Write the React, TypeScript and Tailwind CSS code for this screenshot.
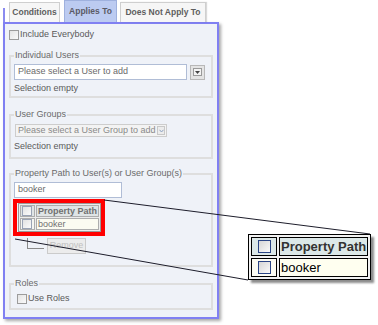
import React from 'react';

const Check = ({ size = 'small' }: { size?: 'small' | 'big' | 'tiny' }) => {
  if (size === 'big') {
    return (
      <span className="block w-[13px] h-[13px] border border-[#2b4585] bg-gradient-to-br from-[#d6d6d6] to-[#fafafa]" />
    );
  }
  if (size === 'tiny') {
    return <span className="block w-[10px] h-[10px] border border-[#9aa3b5] bg-gradient-to-br from-[#e2e2e2] to-[#fbfbfb]" />;
  }
  return <span className="block w-[10px] h-[10px] border border-[#9c9c9c] bg-gradient-to-br from-[#e4e4e4] to-[#fafafa]" />;
};

const Fieldset = ({ legend, className = '', children }: { legend: string; className?: string; children: React.ReactNode }) => (
  <fieldset className={`border-2 border-[#dedede] px-[3px] ${className}`}>
    <legend className="px-[1px] leading-[11px] text-[#6a6a6a]">{legend}</legend>
    {children}
  </fieldset>
);

const App: React.FC = () => {
  return (
    <div className="relative w-[378px] h-[325px] bg-white overflow-hidden font-['Liberation_Sans',Arial,sans-serif] text-[9px]">
      <div className="pl-[3px] w-[225px]">
        {/* Tabs */}
        <div className="flex items-end h-[22px]">
          <div className="w-[2px] h-[14px] bg-[#8b8bf0]" />
          <div className="ml-[4px] w-[51px] h-[20px] flex items-center justify-center border border-b-0 border-[#cfcfcf] bg-[#f6f6f6] font-bold text-[#5e5e5e] text-[8.5px]">
            Conditions
          </div>
          <div className="ml-[4px] w-[53px] h-[22px] flex items-center justify-center border border-b-0 border-[#9fb1de] bg-[#bccbf1] font-bold text-[#5a5a66] text-[8.5px]">
            Applies To
          </div>
          <div className="ml-[3px] w-[86px] h-[20px] flex items-center justify-center border border-b-0 border-[#cfcfcf] bg-[#f6f6f6] font-bold text-[#5e5e5e] text-[8.5px] shadow-[1px_0_1px_rgba(0,0,0,0.15)]">
            Does Not Apply To
          </div>
        </div>

        {/* Panel */}
        <div className="w-[216px] h-[297px] border-2 border-[#8080f2] bg-[#eff2f8] shadow-[2px_2px_3px_rgba(0,0,0,0.35)] px-[4px] pt-[5px] text-[#5a5a5a]">
          <div className="flex items-center gap-[1px] h-[11px]">
            <Check />
            <span className="leading-[11px]">Include Everybody</span>
          </div>

          <Fieldset legend="Individual Users" className="mt-[10px] pb-[2px]">
            <div className="mt-[3px] flex items-center gap-[3px]">
              <div className="w-[173px] h-[16px] border border-[#b0bdd6] bg-white px-[3px] flex items-center text-[#6a6a6a]">
                Please select a User to add
              </div>
              <div className="w-[15px] h-[15px] border border-[#b8b8b8] bg-[#e4e4e4] flex items-center justify-center">
                <span className="w-[9px] h-[8px] border border-[#9a9a9a] bg-[#f4f4f4] flex items-center justify-center">
                  <svg width="5" height="3" viewBox="0 0 5 3">
                    <path d="M0 0h5L2.5 3z" fill="#444" />
                  </svg>
                </span>
              </div>
            </div>
            <div className="mt-[3px] leading-[11px]">Selection empty</div>
          </Fieldset>

          <Fieldset legend="User Groups" className="mt-[11px] pb-[5px]">
            <div className="mt-[4px] ml-[1px] w-[152px] h-[13px] border border-[#cdcdcd] bg-[#f3f3f3] flex items-center justify-between pl-[2px] pr-[1px] text-[#8a8a8a] whitespace-nowrap">
              <span>Please select a User Group to add</span>
              <span className="w-[8px] h-[9px] border border-[#c8c8c8] bg-[#ececec] flex items-center justify-center">
                <svg width="5" height="4" viewBox="0 0 5 4">
                  <path d="M0.5 0.8L2.5 3L4.5 0.8" stroke="#8aa0c0" fill="none" strokeWidth="1" />
                </svg>
              </span>
            </div>
            <div className="mt-[4px] leading-[11px]">Selection empty</div>
          </Fieldset>

          <Fieldset legend="Property Path to User(s) or User Group(s)" className="mt-[9px] pb-[11px]">
            <div className="mt-[3px] w-[108px] h-[16px] border border-[#b0bdd6] bg-white px-[3px] flex items-center text-[#6a6a6a]">
              booker
            </div>
            <div className="mt-[1px] -ml-[1px] w-[92px] border-4 border-[#ff0000] pl-[1px] py-0">
              <table className="border-separate border-spacing-[1px] border border-[#9a9a9a] bg-[#ececec] whitespace-nowrap">
                <tbody>
                  <tr>
                    <td className="w-[16px] h-[12px] border border-[#adadad] bg-[#dfe4e5] p-0">
                      <div className="flex justify-center"><Check size="tiny" /></div>
                    </td>
                    <td className="h-[12px] border border-[#adadad] bg-[#dfe4e5] px-[1px] py-0 font-bold text-[#707070] leading-[10px]">
                      Property Path
                    </td>
                  </tr>
                  <tr>
                    <td className="w-[16px] h-[12px] border border-[#adadad] bg-[#f4f5f1] p-0">
                      <div className="flex justify-center"><Check size="tiny" /></div>
                    </td>
                    <td className="h-[12px] border border-[#adadad] bg-[#fbfbf1] px-[1px] py-0 text-[#707070] leading-[10px]">
                      booker
                    </td>
                  </tr>
                </tbody>
              </table>
            </div>
            <div className="flex items-start mt-[2px]">
              <div className="ml-[13px] w-[17px] h-[11px] border-l border-b border-[#8a8a8a]" />
              <div className="ml-[3px] w-[39px] h-[16px] border border-[#cbcbcb] bg-[#ececec] flex items-center justify-center text-[#c0c0c0]">
                Remove
              </div>
            </div>
          </Fieldset>

          <Fieldset legend="Roles" className="mt-[11px] pb-[4px]">
            <div className="mt-[4px] ml-[3px] flex items-center gap-[1px] h-[11px]">
              <Check />
              <span className="leading-[11px]">Use Roles</span>
            </div>
          </Fieldset>
        </div>
      </div>

      {/* Callout lines */}
      <svg className="absolute inset-0 pointer-events-none" width="378" height="325" viewBox="0 0 378 325">
        <line x1="104" y1="200" x2="370" y2="234" stroke="#1d1d2b" strokeWidth="1" />
        <line x1="15" y1="239" x2="248" y2="280" stroke="#1d1d2b" strokeWidth="1" />
      </svg>

      {/* Magnified callout */}
      <div className="absolute left-[248px] top-[234px] shadow-[3px_3px_2px_rgba(0,0,0,0.45)] text-[13px]">
        <table className="border-separate border-spacing-[2px] border border-black bg-[#f2f2f2] whitespace-nowrap">
          <tbody>
            <tr>
              <td className="w-[26px] h-[19px] border border-black bg-[#dce8e8] p-0">
                <div className="flex justify-center"><Check size="big" /></div>
              </td>
              <td className="h-[19px] border border-black bg-[#dce8e8] px-[1px] py-0 font-bold text-[#333] leading-[17px]">
                Property Path
              </td>
            </tr>
            <tr>
              <td className="w-[26px] h-[19px] border border-black bg-[#fdfdf4] p-0">
                <div className="flex justify-center"><Check size="big" /></div>
              </td>
              <td className="h-[19px] border border-black bg-[#fffff0] px-[1px] py-0 text-black leading-[17px]">
                booker
              </td>
            </tr>
          </tbody>
        </table>
      </div>
    </div>
  );
};

export default App;
